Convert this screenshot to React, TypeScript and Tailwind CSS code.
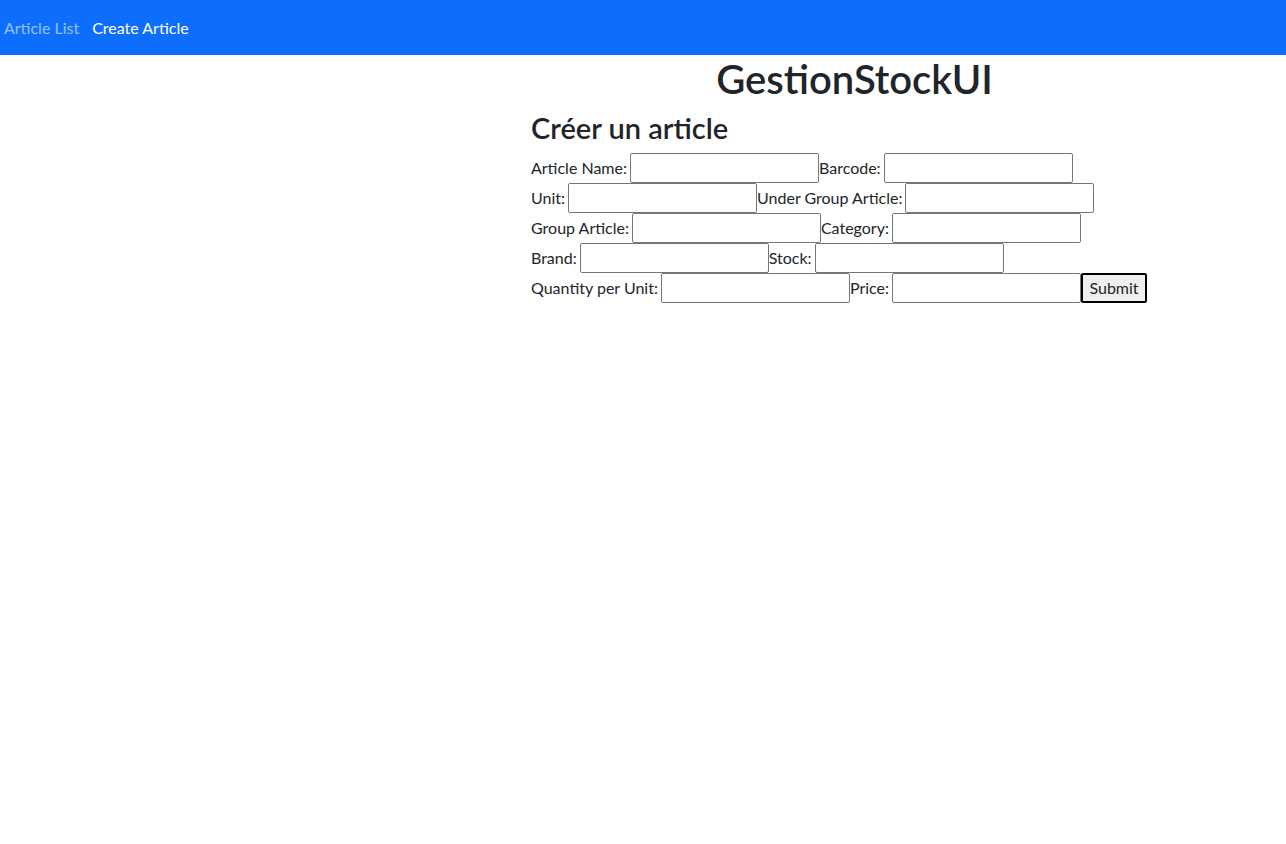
import React from 'react';

type Field = { label: string };

const rows: Field[][] = [
  [{ label: 'Article Name:' }, { label: 'Barcode:' }],
  [{ label: 'Unit:' }, { label: 'Under Group Article:' }],
  [{ label: 'Group Article:' }, { label: 'Category:' }],
  [{ label: 'Brand:' }, { label: 'Stock:' }],
  [{ label: 'Quantity per Unit:' }, { label: 'Price:' }],
];

const FieldInput: React.FC<Field> = ({ label }) => (
  <label className="flex items-center">
    <span className="mr-[3px]">{label}</span>
    <input type="text" className="w-[189px] h-[30px] border border-[#767676] rounded-[2px] bg-white px-[2px] text-[16px]" />
  </label>
);

export default function App() {
  return (
    <div className="min-h-screen bg-white text-[#212529] text-[16px] leading-[1.5] font-['Lato',sans-serif]">
      <nav className="h-[55px] bg-[#0d6efd] flex items-center gap-[13px] pl-1">
        <a href="#" className="text-white/55">Article List</a>
        <a href="#" className="text-white">Create Article</a>
      </nav>

      <div className="flex">
        <div className="w-[531px] shrink-0"></div>
        <main className="w-[647px]">
          <h1 className="text-center text-[40px] font-semibold leading-[48px] mb-2">GestionStockUI</h1>
          <h3 className="text-[29px] font-semibold leading-[34px] mb-2">Créer un article</h3>
          <form className="flex flex-col">
            {rows.map((row, i) => (
              <div key={i} className="flex items-center h-[30px]">
                {row.map((f) => (
                  <FieldInput key={f.label} label={f.label} />
                ))}
                {i === rows.length - 1 && (
                  <button type="submit" className="w-[66px] h-[30px] border-2 border-black rounded-[2px] bg-[#efefef] text-[16px]">
                    Submit
                  </button>
                )}
              </div>
            ))}
          </form>
        </main>
      </div>
    </div>
  );
}
